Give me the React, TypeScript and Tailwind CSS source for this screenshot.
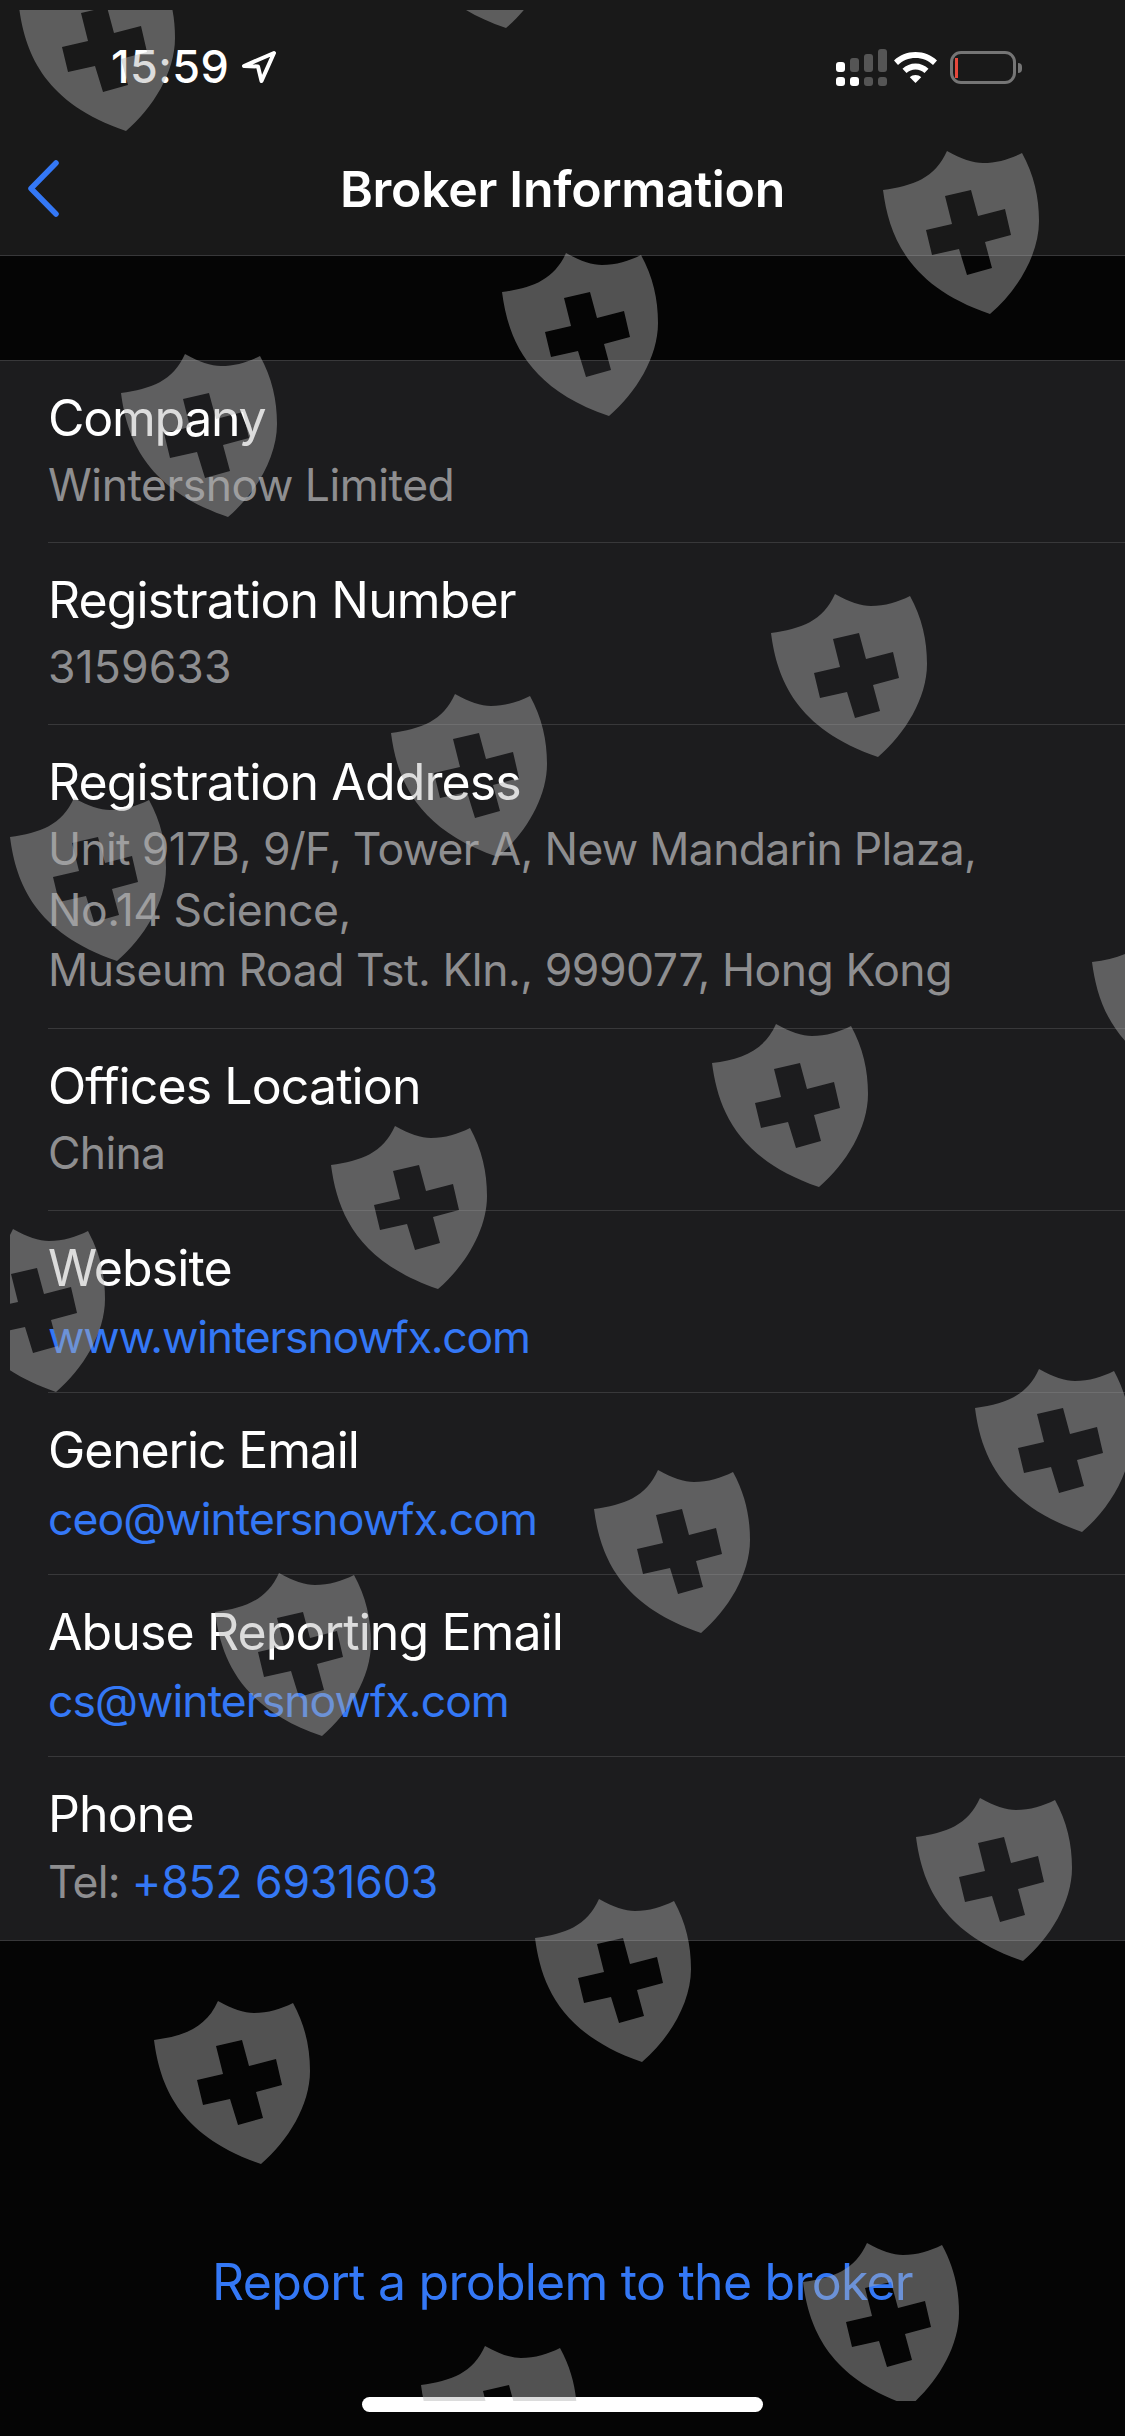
import type { ReactNode } from "react";

interface InfoRow {
  label: ReactNode;
  value: ReactNode;
  valueClass?: string;
}

const BLUE = "text-[#3478f6]";

const ROWS: InfoRow[] = [
  {
    label: <span className="tracking-[-1.3px]">Company</span>,
    value: <span className="tracking-[-0.5px]">Wintersnow Limited</span>,
  },
  { label: "Registration Number", value: <span className="tracking-[0.1px]">3159633</span> },
  {
    label: "Registration Address",
    value: (
      <>
        Unit 917B, 9/F, Tower A, New Mandarin Plaza,
        <br />
        <span className="tracking-[-0.5px]">No.14 Science,</span>
        <br />
        <span className="tracking-[-0.47px]">Museum Road Tst. Kln., 999077, Hong Kong</span>
      </>
    ),
  },
  { label: "Offices Location", value: "China" },
  {
    label: "Website",
    value: <span className={`${BLUE} tracking-[-1.2px]`}>www.wintersnowfx.com</span>,
    valueClass: "mt-[10px] -mb-[2px]",
  },
  {
    label: <span className="tracking-[-1.15px]">Generic Email</span>,
    value: <span className={`${BLUE} tracking-[-0.95px]`}>ceo@wintersnowfx.com</span>,
    valueClass: "mt-[10px] -mb-[2px]",
  },
  {
    label: "Abuse Reporting Email",
    value: <span className={`${BLUE} tracking-[-0.95px]`}>cs@wintersnowfx.com</span>,
    valueClass: "mt-[10px] -mb-[2px]",
  },
  {
    label: "Phone",
    value: (
      <>
        Tel: <span className={`${BLUE} tracking-[-0.1px]`}>+852 6931603</span>
      </>
    ),
    valueClass: "mt-[9px] -mb-[1px]",
  },
];

// watermark shields, placed freely over the page
const SHIELDS = [
  "left-[19px] top-[-32px]",
  "left-[399px] top-[-135px]",
  "left-[883px] top-[151px]",
  "left-[502px] top-[253px]",
  "left-[121px] top-[354px]",
  "left-[771px] top-[594px]",
  "left-[391px] top-[694px]",
  "left-[10px] top-[798px]",
  "left-[1092px] top-[923px]",
  "left-[712px] top-[1024px]",
  "left-[331px] top-[1126px]",
  "left-[-51px] top-[1229px]",
  "left-[975px] top-[1369px]",
  "left-[594px] top-[1470px]",
  "left-[215px] top-[1573px]",
  "left-[916px] top-[1798px]",
  "left-[535px] top-[1899px]",
  "left-[154px] top-[2001px]",
  "left-[803px] top-[2243px]",
  "left-[421px] top-[2346px]",
];

function Shield({ className }: { className: string }) {
  return (
    <svg
      viewBox="0 0 156 163"
      className={`absolute h-[163px] w-[156px] ${className}`}
      aria-hidden
    >
      <path
        fillRule="evenodd"
        fill="rgba(178,178,178,0.45)"
        d="M64 0C78 8 90 12 100 12C114 12 127 8 139 2C151 24 156 46 156 70C156 104 134 140 107 163C25 135 6 85 0 39C30 35 52 27 64 0ZM62 45L69 73L43 79L49 104L76 98L84 124L109 117L102 91L128 84L122 58L95 65L88 39Z"
      />
    </svg>
  );
}

function StatusIcons() {
  return (
    <div className="mt-[3px] flex items-center">
      <svg viewBox="0 0 52 40" className="h-[40px] w-[52px]" aria-hidden>
        <rect x="0" y="15" width="9" height="10" rx="3" fill="#fff" />
        <rect x="14" y="11" width="9" height="14" rx="3" fill="#555" />
        <rect x="28" y="7" width="9" height="18" rx="3" fill="#555" />
        <rect x="42" y="2" width="9" height="23" rx="3" fill="#555" />
        <rect x="0" y="30" width="9" height="9" rx="3" fill="#fff" />
        <rect x="14" y="30" width="9" height="9" rx="3" fill="#fff" />
        <rect x="28" y="30" width="9" height="9" rx="3" fill="#555" />
        <rect x="42" y="30" width="9" height="9" rx="3" fill="#555" />
      </svg>
      <svg viewBox="0 0 43 31" className="ml-[6px] h-[31px] w-[43px]" aria-hidden>
        <path d="M21.5 0C13 0 5.5 3.2 0 8.5L4 13C8.5 8.6 14.7 6 21.5 6S34.5 8.6 39 13L43 8.5C37.5 3.2 30 0 21.5 0Z" fill="#fff" />
        <path d="M21.5 11.5C16.5 11.5 12 13.5 8.5 16.8L12.5 21C15 18.8 18 17.5 21.5 17.5S28 18.8 30.5 21L34.5 16.8C31 13.5 26.5 11.5 21.5 11.5Z" fill="#fff" />
        <path d="M21.5 23C19.3 23 17.3 23.8 15.8 25.2L21.5 31L27.2 25.2C25.7 23.8 23.7 23 21.5 23Z" fill="#fff" />
      </svg>
      <div className="relative ml-[13px] h-[33px] w-[66px] rounded-[11px] border-[3px] border-[#757575]">
        <div className="absolute left-[2px] top-[4px] h-[20px] w-[3px] bg-[#e5483c]" />
        <div className="absolute right-[-9px] top-[9px] h-[10px] w-[4px] rounded-r-full bg-[#757575]" />
      </div>
    </div>
  );
}

function Row({ row, last }: { row: InfoRow; last: boolean }) {
  return (
    <div className="pl-[48px]">
      <div className={last ? "pt-[28px] pb-[27.7px]" : "border-b border-[#38383a] pt-[28px] pb-[26.7px]"}>
        <p className="text-[50px] leading-[58px] text-white tracking-[-0.9px]">{row.label}</p>
        <p
          className={`text-[44.5px] leading-[60.5px] text-[#8e8e90] tracking-[-0.7px] ${
            row.valueClass ?? "mt-[8px]"
          }`}
        >
          {row.value}
        </p>
      </div>
    </div>
  );
}

export default function App() {
  return (
    <div className="relative h-[2436px] w-[1125px] overflow-hidden bg-[#050505] font-['Inter',sans-serif]">
      <header className="h-[256px] border-b border-[#38383a] bg-[#191919]">
        <div className="flex h-[134px] items-start justify-between pl-[111px] pr-[109px] pt-[44px]">
          <div className="flex items-center gap-[12px]">
            <span className="text-[45px] font-medium leading-[46px] tracking-[0.4px] text-white">15:59</span>
            <svg viewBox="0 0 36 34" className="h-[34px] w-[36px]" fill="none" aria-hidden>
              <path d="M33 3L3 16L17 16.5L20.5 31Z" stroke="#fff" strokeWidth="4" strokeLinejoin="round" />
            </svg>
          </div>
          <StatusIcons />
        </div>
        <div className="relative flex h-[110px] items-center justify-center">
          <svg viewBox="0 0 36 60" className="absolute left-[27px] top-[24px] h-[60px] w-[36px]" fill="none" aria-hidden>
            <path d="M29 5L4 30.5L29 56" stroke="#3478f6" strokeWidth="5.5" strokeLinecap="round" strokeLinejoin="round" />
          </svg>
          <h1 className="text-[50px] font-semibold leading-[60px] tracking-[-0.3px] text-white">Broker Information</h1>
        </div>
      </header>

      <div className="h-[104px]" />

      <section className="border-y border-[#38383a] bg-[#1c1c1e]">
        {ROWS.map((row, i) => (
          <Row key={i} row={row} last={i === ROWS.length - 1} />
        ))}
      </section>

      <div className={`mt-[311px] text-center text-[50px] leading-[60px] tracking-[-0.76px] ${BLUE}`}>
        Report a problem to the broker
      </div>

      <div className="absolute left-[362px] top-[2397px] h-[15px] w-[401px] rounded-full bg-white" />

      <div className="pointer-events-none absolute inset-0 [clip-path:inset(10px_0_35px_10px)]">
        {SHIELDS.map((pos) => (
          <Shield key={pos} className={pos} />
        ))}
      </div>
    </div>
  );
}
